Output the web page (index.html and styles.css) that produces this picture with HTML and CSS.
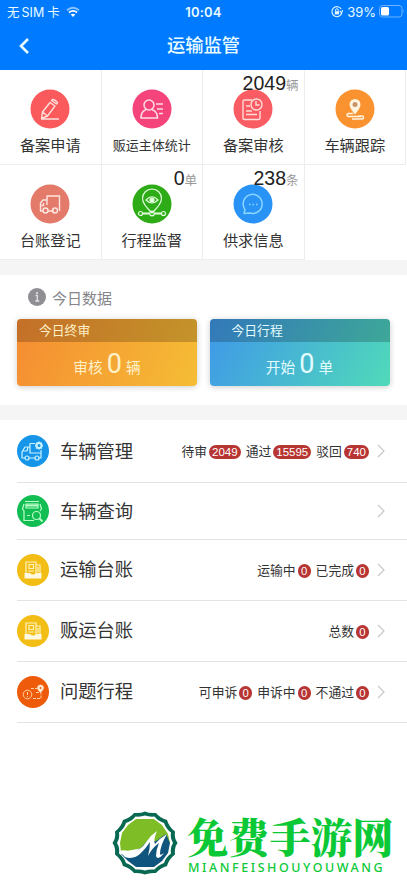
FILE: index.html
```html
<!DOCTYPE html>
<html lang="zh-CN">
<head>
<meta charset="utf-8">
<meta name="viewport" content="width=device-width, initial-scale=1">
<title>运输监管</title>
<link rel="stylesheet" href="styles.css">
</head>
<body>
<header class="top">
  <div class="status">
    <div class="carrier"><span>无<i>SIM</i>卡</span>
      <svg width="14" height="11" viewBox="0 0 14 11" fill="none" stroke="#fff"><path d="M1 4.2Q7-.8 13 4.2" stroke-width="1.8" opacity=".55"/><path d="M3 6.5Q7 3.2 11 6.5" stroke-width="1.8"/><path d="M7 11 4.7 8.4Q7 6.9 9.3 8.4Z" fill="#fff" stroke="none"/></svg>
    </div>
    <div class="clock">10:04</div>
    <div class="power">
      <svg width="12" height="12" viewBox="0 0 12 12" fill="none" stroke="#e8faff"><path d="M10.2 3A5 5 0 1 0 10.8 7M11.6 4.2 10.5 7 8.8 4.8" stroke-width="1.1"/><rect x="3.8" y="5.2" width="4.2" height="3.2" fill="#e8faff" stroke="none"/><path d="M4.6 5.2V4a1.3 1.3 0 0 1 2.6 0v1.2" stroke-width=".9"/></svg>
      <span>39%</span>
      <svg width="26" height="13" viewBox="0 0 26 13"><rect x=".5" y=".5" width="22.5" height="11.5" rx="3" fill="none" stroke="#69b3ff"/><rect x="2" y="2" width="8" height="8.5" rx="1.5" fill="#fff"/><path d="M24.2 4.3q1.6 2 0 4" fill="#69b3ff"/></svg>
    </div>
  </div>
  <div class="nav">
    <svg class="back" width="12" height="18" viewBox="0 0 12 18" fill="none" stroke="#e8fbff" stroke-width="2.6"><path d="M10 2 3 9l7 7"/></svg>
    <h1>运输监管</h1>
  </div>
</header>

<main>
<section class="grid">
  <div class="cell">
    <svg class="disc" viewBox="0 0 40 40"><circle cx="20" cy="20" r="19.5" fill="#fa5a5c"/><g fill="none" stroke="#ffe0da" stroke-width="1.4" stroke-linejoin="round"><path d="M11 30H29M11.5 29.5 12.5 23 20 13.5 25 17 17.5 27ZM12.5 23 17.5 27M21.5 11.5 22.5 10.5Q24.5 10 27.5 13.5L26.5 15Z"/></g></svg>
    <span class="label">备案申请</span>
  </div>
  <div class="cell">
    <svg class="disc" viewBox="0 0 40 40"><circle cx="20" cy="20" r="19.5" fill="#f5437c"/><g fill="none" stroke="#ffdce6" stroke-width="1.5"><circle cx="17" cy="16" r="5"/><path d="M14 20.5Q9 22.5 9 29H25.500Q25.500 22.500 20 20.500M24 15h7M25 20h6M27 24.500h4"/></g></svg>
    <span class="label small">贩运主体统计</span>
  </div>
  <div class="cell">
    <svg class="disc" viewBox="0 0 40 40"><circle cx="20" cy="20" r="19.5" fill="#f95c62"/><g fill="none" stroke="#ffdcd8" stroke-width="1.4"><path d="M19 11H11.500Q10 11 10 12.500V29Q10 30.500 11.500 30.500H25.500Q27 30.500 27 29V22M13 17h4M13 22h6M13 25.500h11"/><circle cx="23.500" cy="15.500" r="5.500"/><path d="M23 12v4h3.500"/></g></svg>
    <span class="label">备案审核</span>
    <div class="count"><b>2049</b>辆</div>
  </div>
  <div class="cell">
    <svg class="disc" viewBox="0 0 40 40"><circle cx="20" cy="20" r="19.5" fill="#fb9230"/><path d="M20 25.500Q14.500 19 14.500 15.500a5.500 5.500 0 0 1 11 0Q25.500 19 20 25.500Z" fill="#fff4df"/><circle cx="20" cy="15.500" r="2.500" fill="#c89668"/><path d="M18 24.500H13.500a1.500 1.500 0 0 0 0 3H26M17 30H27a1.500 1.500 0 0 0 0-3H23" fill="none" stroke="#fff4df" stroke-width="1.500"/></svg>
    <span class="label">车辆跟踪</span>
  </div>
  <div class="cell">
    <svg class="disc" viewBox="0 0 40 40"><circle cx="20" cy="20" r="19.5" fill="#e37a6a"/><g fill="none" stroke="#ffe5df" stroke-width="1.4" stroke-linejoin="round"><path d="M13 27H10.500V19L13 16H17V12H29.500V27M18 27H24M17 16V21M13.500 19v2.500h-2"/><circle cx="15.500" cy="26.500" r="2.500"/><circle cx="25" cy="26.500" r="2.500"/></g></svg>
    <span class="label">台账登记</span>
  </div>
  <div class="cell">
    <svg class="disc" viewBox="0 0 40 40"><circle cx="20" cy="20" r="19.5" fill="#2eac18"/><g fill="none" stroke="#e1ffdb" stroke-width="1.2"><path d="M20 29Q10.500 20 10.500 14.500a9.500 9.500 0 0 1 19 0Q29.500 20 20 29ZM14 16q6-6.500 12 0q-6 6-12 0Z"/><circle cx="20" cy="16" r="2" fill="#e1ffdb"/><path d="M10 29.500h7M23 29.500h7" stroke-width="2"/><circle cx="8.500" cy="29.500" r="2"/><circle cx="20" cy="29.500" r="2.300"/><circle cx="31.500" cy="29.500" r="2"/></g></svg>
    <span class="label">行程监督</span>
    <div class="count"><b>0</b>单</div>
  </div>
  <div class="cell">
    <svg class="disc" viewBox="0 0 40 40"><circle cx="20" cy="20" r="19.500" fill="#2892f5"/><path d="M11 29.500 12 25.500A9.500 9.500 0 1 1 17 29Z" fill="none" stroke="#8ad6ff" stroke-width="1.500" stroke-linejoin="round"/><path d="M16 20.500h9" stroke="#8ad6ff" stroke-width="1.500" stroke-dasharray="1.500 2"/></svg>
    <span class="label">供求信息</span>
    <div class="count"><b>238</b>条</div>
  </div>
</section>

<section class="today">
  <h2><svg width="18" height="18" viewBox="0 0 18 18"><circle cx="9" cy="9" r="9" fill="#8e8e93"/><path d="M7.500 7.500H9.300V13M7.300 13h4" fill="none" stroke="#e4e4e6" stroke-width="1.300"/><circle cx="9" cy="5" r="1.100" fill="#e4e4e6"/></svg>今日数据</h2>
  <div class="cards">
    <div class="card orange"><div class="card-head">今日终审</div><div class="card-body">审核<b>0</b>辆</div></div>
    <div class="card blue"><div class="card-head">今日行程</div><div class="card-body">开始<b>0</b>单</div></div>
  </div>
</section>

<section class="list">
  <div class="row first">
    <svg class="icon" viewBox="0 0 32 32"><circle cx="16" cy="16" r="16" fill="#1795e8"/><g fill="none" stroke="#c9f4ff" stroke-width="1.200" stroke-linejoin="round"><path d="M8 23H5V17L8 12H13V8.500H18M13 12V18H24V15M24 18V23H22M12 23h6M6 16h4l1-4"/><circle cx="10" cy="23" r="2"/><circle cx="20" cy="23" r="2"/><circle cx="22" cy="10.500" r="2.500" stroke-width="2"/><path d="M22 6.500v1M22 13.500v1M18 10.500h1M25 10.500h1M19.200 7.700l1 1M24 12.500l1 1M24.800 7.700l-1 1M20 12.500l-1 1" stroke-width="1.500"/></g></svg>
    <h3>车辆管理</h3>
    <div class="stats"><span>待审<em>2049</em></span><span>通过<em>15595</em></span><span>驳回<em>740</em></span></div>
    <svg class="go" viewBox="0 0 8 14"><path d="m1 1 6 6-6 6"/></svg>
  </div>
  <div class="row second">
    <svg class="icon" viewBox="0 0 32 32"><circle cx="16" cy="16" r="16" fill="#12bd54"/><g fill="none" stroke="#baffc6" stroke-width="1.200"><path d="M8 6.500H22M9 9V13H21V9ZM7 9 5.500 14 7 16V25.500H17M23 9l1.500 5-1.500 2M10 20.500h3"/><path d="M9 10.500h12" stroke-width="2"/><circle cx="19.500" cy="20.500" r="4"/><path d="m22.500 23.500 3 3" stroke-width="2"/></g></svg>
    <h3>车辆查询</h3>
    <svg class="go" viewBox="0 0 8 14"><path d="m1 1 6 6-6 6"/></svg>
  </div>
  <div class="row">
    <svg class="icon" viewBox="0 0 32 32"><circle cx="16" cy="16" r="16" fill="#f2bd15"/><g fill="none" stroke="#fff3bd" stroke-width="1.200"><path d="M9 19V8H19V19M19 11H23V19M21 13v5M12 10.500h4.500v4H12ZM11 17h6"/><path d="M7.500 19H13q3 3 6 0H24.500V24.500H7.500Z" fill="#fff8e0" stroke="none"/></g></svg>
    <h3>运输台账</h3>
    <div class="stats"><span>运输中<em>0</em></span><span>已完成<em>0</em></span></div>
    <svg class="go" viewBox="0 0 8 14"><path d="m1 1 6 6-6 6"/></svg>
  </div>
  <div class="row">
    <svg class="icon" viewBox="0 0 32 32"><circle cx="16" cy="16" r="16" fill="#f2bd15"/><g fill="none" stroke="#fff3bd" stroke-width="1.200"><path d="M9 19V8H19V19M19 11H23V19M21 13v5M12 10.500h4.500v4H12ZM11 17h6"/><path d="M7.500 19H13q3 3 6 0H24.500V24.500H7.500Z" fill="#fff8e0" stroke="none"/></g></svg>
    <h3>贩运台账</h3>
    <div class="stats"><span>总数<em>0</em></span></div>
    <svg class="go" viewBox="0 0 8 14"><path d="m1 1 6 6-6 6"/></svg>
  </div>
  <div class="row">
    <svg class="icon" viewBox="0 0 32 32"><circle cx="16" cy="16" r="16" fill="#ee5b0b"/><g fill="none" stroke="#ffd0a3" stroke-width="1"><circle cx="10.500" cy="18.500" r="4.300"/><path d="M10.500 16v3M10.500 20v1"/><path d="M14 12.500h6M16 22.500h8v-6h-5" stroke-dasharray="3 1"/><path d="M23.500 16.500Q20.500 13.500 20.500 12a3 3 0 0 1 6 0q0 1.500-3 4.500Z" fill="#fff0df"/><circle cx="23.500" cy="12" r="1" fill="#ee5b0b" stroke="none"/></g></svg>
    <h3>问题行程</h3>
    <div class="stats"><span>可申诉<em>0</em></span><span>申诉中<em>0</em></span><span>不通过<em>0</em></span></div>
    <svg class="go" viewBox="0 0 8 14"><path d="m1 1 6 6-6 6"/></svg>
  </div>
</section>
</main>

<footer class="brand">
  <svg width="68" height="66" viewBox="0 0 68 66">
    <path d="M34 1.500Q38 3.500 45 3Q49 8 56 10Q58 17 64 21.500Q63 28 66.500 33Q63 38 64 44.500Q58 49 56 56Q49 58 45 63Q38 62.500 34 64.500Q30 62.500 23 63Q19 58 12 56Q10 49 4 44.500Q5 38 1.500 33Q5 28 4 21.500Q10 17 12 10Q19 8 23 3Q30 3.500 34 1.500Z" fill="#086952"/>
    <path d="M34 5.500Q38 7 43.500 6.500Q47 11 53 13Q55 19 60 22.500Q59 28 62 33Q59 38 60 43.500Q55 47 53 53Q47 55 43.500 59.500Q38 59 34 60.500Q30 59 24.500 59.500Q21 55 15 53Q13 47 8 43.500Q9 38 6 33Q9 28 8 22.500Q13 19 15 13Q21 11 24.500 6.500Q30 7 34 5.500Z" fill="#fff"/>
    <path d="M25 9H43L51 15 57 24 59 33 10 42 9 33 11 23 17 15Z" fill="#7fbd27"/>
    <path d="M10 44Q25 46 36 31L43 25Q40 36 49 28L55 24 59 33 57 43 51 51 43 57H25L17 51Z" fill="#10557d"/>
    <path d="M8 41Q15 39 19 42Q29 42 36 31Q40 25 46 21Q42 30 44 34Q49 28 56 24Q49 36 49 44Q49 46 53 43Q47 51 45 46Q45 40 48 33Q41 38 37 46Q39 38 39 32Q35 38 30 43Q23 50 14 47Z" fill="#fff"/>
  </svg>
  <div class="brand-text"><strong>免费手游网</strong><small>MIANFEISHOUYOUWANG</small></div>
</footer>
</body>
</html>
```

FILE: styles.css
```css
* { box-sizing: border-box; }
body { margin: 0; width: 407px; height: 883px; overflow: hidden; background: #fff; color: #333; font-family: "Liberation Sans", "Noto Sans CJK SC", sans-serif; }
h1, h2, h3 { margin: 0; font-weight: 400; }
svg { display: block; flex: none; }
main { display: block; }
.top { height: 70px; background: #007aff; color: #e8fbff; }
.status { display: grid; grid-template-columns: 1fr 60px 1fr; align-items: center; height: 23px; padding: 0 7px; font-family: Inter, "Noto Sans CJK SC", sans-serif; font-size: 12.5px; }
.carrier, .power { display: flex; align-items: center; }
.carrier { gap: 6px; }
.carrier i { margin: 0 3px 0 2px; font-style: normal; }
.clock { text-align: center; font-size: 13px; font-weight: 600; letter-spacing: .2px; }
.power { justify-content: flex-end; gap: 5px; margin-right: -5px; font-size: 13px; }
.power span { margin-right: -2px; }
.power svg:first-child { margin-right: -1px; }
.nav { display: grid; grid-template-columns: 40px 1fr 40px; align-items: center; height: 45px; }
.back { margin-left: 18px; }
.nav h1 { text-align: center; font-size: 18.3px; font-weight: 500; line-height: 26px; }

.grid { display: grid; grid-template-columns: repeat(4, 101.5px); grid-auto-rows: 95px; height: 190px; }
.cell { position: relative; display: flex; flex-direction: column; align-items: center; padding-top: 19px; border-right: 1px solid #ededed; border-bottom: 1px solid #ededed; }
.disc { width: 40px; height: 40px; }
.label { margin-top: 6px; font-size: 15.2px; line-height: 22px; white-space: nowrap; }
.label.small { font-size: 13px; }
.count { position: absolute; top: 2px; right: 5px; line-height: 23px; font-size: 12.5px; color: #999; white-space: nowrap; }
.count b { font-size: 19.5px; font-weight: 400; color: #222; }

.today { height: 160px; padding: 11px 17px 0; background: #fff; border-top: 15px solid #f5f5f5; border-bottom: 15px solid #f5f5f5; }
.today h2 { display: flex; align-items: center; gap: 6px; height: 22px; padding-left: 11px; font-size: 15px; color: #85858a; }
.cards { display: grid; grid-template-columns: 180px 180px; gap: 12.5px; margin-top: 11px; }
.card { height: 67px; border-radius: 4px; overflow: hidden; box-shadow: 0 1px 6px #0003; }
.orange { background: linear-gradient(110deg, #f58c32, #f5bd35); color: #fff1c9; }
.blue { background: linear-gradient(120deg, #3f97e9, #50dab9); color: #e3fbff; }
.card-head { height: 23px; padding-left: 22px; background: #0003; font-size: 12.8px; line-height: 23px; }
.card-body { display: flex; justify-content: center; align-items: baseline; gap: 4px; font-size: 14.7px; line-height: 44px; }
.card-body b { font: 400 27px/44px Roboto, sans-serif; }

.list { padding-left: 17px; }
.row { display: flex; align-items: center; height: 61px; padding-right: 22px; border-bottom: 1px solid #e3e3e3; }
.row.first { height: 63px; }
.row.second { height: 57px; }
.icon { width: 32px; height: 32px; }
.row h3 { margin-left: 11px; font-size: 18.3px; line-height: 26px; white-space: nowrap; }
.row.first h3, .row.second h3 { padding-top: 1px; }
.stats { display: flex; gap: 5px; margin-left: auto; padding-top: 2px; font-size: 12.8px; white-space: nowrap; }
.stats span { display: flex; align-items: center; gap: 2px; line-height: 20px; }
.stats em { min-width: 13px; height: 14px; padding: 0 3px; border-radius: 7px; background: #b73532; color: #fff; font-size: 11.3px; font-style: normal; line-height: 14.500px; text-align: center; }
.first .stats em { font-size: 11.5px; }
.go { width: 8px; height: 14px; margin-left: 8px; fill: none; stroke: #c7c7cc; stroke-width: 1.2; }
.second .go { margin-left: auto; }

.brand { display: flex; gap: 8px; padding: 87px 0 0 111px; }
.brand-text { display: flex; flex-direction: column; color: #0bc936; white-space: nowrap; }
.brand strong { height: 51px; font: 900 41.3px/51px "Noto Serif CJK SC", "Noto Sans CJK SC", serif; }
.brand small { padding-left: 1px; font: 500 12.5px/14px "Noto Sans", sans-serif; letter-spacing: 2.55px; }
```
